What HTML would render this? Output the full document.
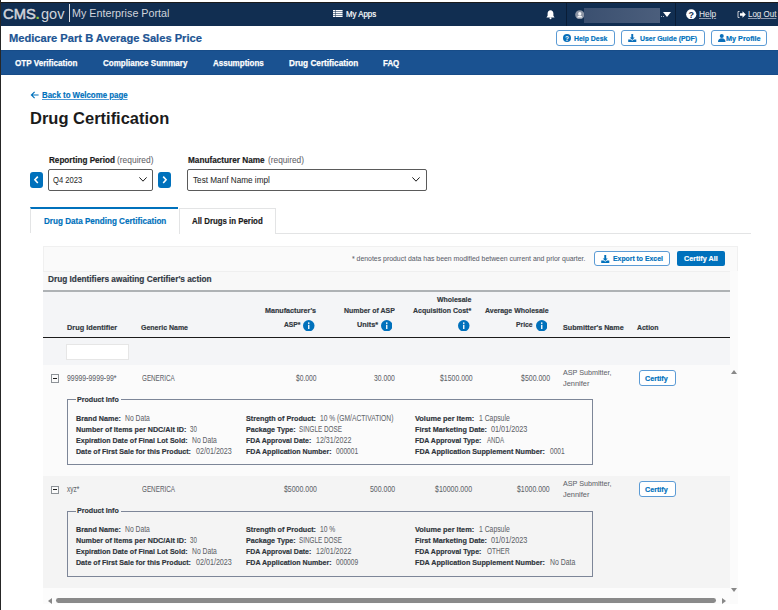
<!DOCTYPE html>
<html><head><meta charset="utf-8"><style>
html,body{margin:0;padding:0;}
body{width:778px;height:610px;overflow:hidden;position:relative;background:#fff;font-family:'Liberation Sans', sans-serif;}
.t{position:absolute;line-height:1;white-space:pre;transform-origin:0 0;}
.bm{display:inline-block;width:0;height:0;vertical-align:baseline;}
.a{position:absolute;box-sizing:border-box;}
</style></head><body>
<!-- header -->
<div class="a" style="left:0;top:2px;width:778px;height:1px;background:#1c1c1c"></div>
<div class="a" style="left:0;top:3px;width:778px;height:23px;background:#112e51"></div>
<div class="a" style="left:0;top:0;width:1px;height:610px;background:#262626;z-index:5"></div>
<div class="a" style="left:69px;top:4px;width:1px;height:18px;background:#d9dbe0"></div>
<!-- my apps icon -->
<svg class="a" style="left:333.3px;top:10px" width="9.6" height="7.1" viewBox="0 0 9.6 7.1"><g fill="#fff"><rect x="0" y="0" width="2" height="1.4"/><rect x="2.5" y="0" width="7.1" height="1.4"/><rect x="0" y="1.9" width="2" height="1.4"/><rect x="2.5" y="1.9" width="7.1" height="1.4"/><rect x="0" y="3.8" width="2" height="1.4"/><rect x="2.5" y="3.8" width="7.1" height="1.4"/><rect x="0" y="5.7" width="2" height="1.4"/><rect x="2.5" y="5.7" width="7.1" height="1.4"/></g></svg>
<!-- bell -->
<svg class="a" style="left:545px;top:9px" width="11" height="11" viewBox="0 0 11 11"><path d="M5.5 1.2c-1.8 0-2.9 1.4-2.9 3.2v2.3L1.4 8.4h8.2L8.4 6.7V4.4c0-1.8-1.1-3.2-2.9-3.2z" fill="#fff"/><circle cx="5.5" cy="9.3" r="1" fill="#fff"/></svg>
<div class="a" style="left:566px;top:3px;width:1px;height:23px;background:#0a1d36"></div>
<!-- user -->
<svg class="a" style="left:574.8px;top:9.8px" width="9.5" height="9.5" viewBox="0 0 10 10"><circle cx="5" cy="5" r="4.8" fill="#8c95a5"/><circle cx="5" cy="3.9" r="1.7" fill="#f4f5f7"/><path d="M2.2 7.9c.5-1.5 1.6-2.1 2.8-2.1s2.3.6 2.8 2.1z" fill="#f4f5f7"/></svg>
<div class="a" style="left:584px;top:8px;width:76px;height:15px;background:linear-gradient(90deg,#3b5070,#4b5e7c)"></div>
<div class="a" style="left:660.5px;top:16px;width:1.2px;height:1.2px;background:#aab2c0"></div><div class="a" style="left:662.8px;top:16px;width:1.2px;height:1.2px;background:#aab2c0"></div>
<svg class="a" style="left:663px;top:12px" width="8" height="5" viewBox="0 0 8 5"><path d="M0 0h8L4 5z" fill="#fff"/></svg>
<div class="a" style="left:675px;top:3px;width:1px;height:23px;background:#0a1d36"></div>
<!-- help icon -->
<svg class="a" style="left:686px;top:8.5px" width="10.5" height="10.5" viewBox="0 0 10.5 10.5"><circle cx="5.25" cy="5.25" r="5.1" fill="#fff"/><text x="5.25" y="8.6" text-anchor="middle" font-family="Liberation Sans" font-weight="700" font-size="9" fill="#112e51">?</text></svg>
<!-- logout icon -->
<svg class="a" style="left:737px;top:10.5px" width="9" height="7" viewBox="0 0 9 7"><path d="M2.5 0.5H1v6h1.5" stroke="#c9ccd4" stroke-width="1" fill="none"/><path d="M3 2.3h2.5V0.3L8.8 3.5 5.5 6.7V4.7H3z" fill="#fff"/></svg>

<!-- subheader buttons -->
<div class="a" style="left:555.7px;top:30px;width:59px;height:15.5px;border:1.5px solid #5b9bd5;border-radius:3px;background:#fff"></div>
<svg class="a" style="left:563px;top:33.8px" width="8" height="8" viewBox="0 0 8 8"><circle cx="4" cy="4" r="4" fill="#0b6fba"/><text x="4" y="6.6" text-anchor="middle" font-family="Liberation Sans" font-weight="700" font-size="6.5" fill="#fff">?</text></svg>
<div class="a" style="left:621.3px;top:30px;width:83.4px;height:15.5px;border:1.5px solid #5b9bd5;border-radius:3px;background:#fff"></div>
<svg class="a" style="left:628px;top:34px" width="8.5" height="8" viewBox="0 0 8.5 8"><path d="M3.3 0h1.9v3.4h1.6L4.25 6 1.7 3.4h1.6z" fill="#0b6fba"/><path d="M0.2 5.4h2.4l1.65 1.4 1.65-1.4h2.4v2.6H0.2z" fill="#0b6fba"/></svg>
<div class="a" style="left:711px;top:30px;width:56px;height:15.5px;border:1.5px solid #5b9bd5;border-radius:3px;background:#fff"></div>
<svg class="a" style="left:718px;top:34px" width="7.5" height="8" viewBox="0 0 7.5 8"><circle cx="3.75" cy="2" r="2" fill="#0b6fba"/><path d="M0 8c0-2.6 1.5-3.7 3.75-3.7S7.5 5.4 7.5 8z" fill="#0b6fba"/></svg>

<!-- nav -->
<div class="a" style="left:0;top:50px;width:778px;height:24.6px;background:#1a5291;border-top:1px solid #174c88;border-bottom:1px solid #174c88"></div>

<!-- back arrow -->
<svg class="a" style="left:30px;top:91px" width="9" height="8" viewBox="0 0 9 8"><path d="M8.6 4H1.6M4.6 0.8L1.4 4l3.2 3.2" stroke="#0071bc" stroke-width="1.15" fill="none"/></svg>

<!-- selects -->
<div class="a" style="left:30px;top:172px;width:13px;height:15.6px;background:#0071bc;border-radius:3px"></div>
<svg class="a" style="left:30px;top:172px" width="13" height="15.6" viewBox="0 0 13 15.6"><path d="M7.8 4.6L4.9 7.8l2.9 3.2" stroke="#fff" stroke-width="1.6" fill="none"/></svg>
<div class="a" style="left:48px;top:169px;width:105px;height:21.5px;border:1.5px solid #5a5a5a;border-radius:2px;background:#fff"></div>
<svg class="a" style="left:139px;top:177px" width="8" height="5" viewBox="0 0 8 5"><path d="M0.4 0.4L4 4.2 7.6 0.4" stroke="#1b1b1b" stroke-width="1" fill="none"/></svg>
<div class="a" style="left:158.3px;top:172px;width:13px;height:15.6px;background:#0071bc;border-radius:3px"></div>
<svg class="a" style="left:158.3px;top:172px" width="13" height="15.6" viewBox="0 0 13 15.6"><path d="M5.2 4.6l2.9 3.2-2.9 3.2" stroke="#fff" stroke-width="1.6" fill="none"/></svg>
<div class="a" style="left:187.4px;top:169px;width:239.3px;height:21.8px;border:1.5px solid #5a5a5a;border-radius:2px;background:#fff"></div>
<svg class="a" style="left:412.3px;top:177px" width="8" height="5" viewBox="0 0 8 5"><path d="M0.4 0.4L4 4.2 7.6 0.4" stroke="#1b1b1b" stroke-width="1" fill="none"/></svg>

<!-- tabs -->
<div class="a" style="left:178.5px;top:233px;width:572.5px;height:1px;background:#e3e4e5"></div>
<div class="a" style="left:30.4px;top:207px;width:148.1px;height:26px;border-left:1px solid #e3e4e5;border-top:2px solid #0071bc;background:#fff"></div>
<div class="a" style="left:178.5px;top:207.6px;width:97px;height:26px;border:1px solid #e3e4e5;border-bottom:none;background:#fff"></div>

<!-- container -->
<div class="a" style="left:42.9px;top:245.8px;width:695.1px;height:358.6px;background:#fafafa;border:1px solid #f0f0f0"></div>
<div class="a" style="left:42.9px;top:270.5px;width:687.4px;height:1px;background:#efefef"></div>
<!-- export / certify all -->
<div class="a" style="left:594px;top:251px;width:76px;height:15.3px;border:1.5px solid #5b9bd5;border-radius:3px;background:#fff"></div>
<svg class="a" style="left:601px;top:255px" width="8.5" height="8" viewBox="0 0 8.5 8"><path d="M3.3 0h1.9v3.4h1.6L4.25 6 1.7 3.4h1.6z" fill="#0071bc"/><path d="M0.2 5.4h2.4l1.65 1.4 1.65-1.4h2.4v2.6H0.2z" fill="#0071bc"/></svg>
<div class="a" style="left:677px;top:251px;width:48px;height:15.3px;background:#0071bc;border-radius:2px"></div>

<!-- title row -->
<div class="a" style="left:42.9px;top:271.5px;width:687.4px;height:18px;background:#f8f8f8"></div>
<div class="a" style="left:42.9px;top:290px;width:687.4px;height:2px;background:#aeb2b5"></div>
<!-- header row -->
<div class="a" style="left:42.9px;top:292px;width:687.4px;height:72.8px;background:#f4f5f7"></div>
<div class="a" style="left:42.9px;top:336.8px;width:687.4px;height:1.2px;background:#1b1b1b"></div>
<!-- info icons -->
<svg class="a" style="left:303.3px;top:319.6px" width="11.5" height="11.5" viewBox="0 0 12 12"><circle cx="6" cy="6" r="6" fill="#0071bc"/><rect x="5.3" y="5" width="1.4" height="4.4" fill="#fff"/><circle cx="6" cy="3.3" r="0.85" fill="#fff"/></svg>
<svg class="a" style="left:380.6px;top:319.6px" width="11.5" height="11.5" viewBox="0 0 12 12"><circle cx="6" cy="6" r="6" fill="#0071bc"/><rect x="5.3" y="5" width="1.4" height="4.4" fill="#fff"/><circle cx="6" cy="3.3" r="0.85" fill="#fff"/></svg>
<svg class="a" style="left:458.2px;top:319.8px" width="11.5" height="11.5" viewBox="0 0 12 12"><circle cx="6" cy="6" r="6" fill="#0071bc"/><rect x="5.3" y="5" width="1.4" height="4.4" fill="#fff"/><circle cx="6" cy="3.3" r="0.85" fill="#fff"/></svg>
<svg class="a" style="left:535.9px;top:319.8px" width="11.5" height="11.5" viewBox="0 0 12 12"><circle cx="6" cy="6" r="6" fill="#0071bc"/><rect x="5.3" y="5" width="1.4" height="4.4" fill="#fff"/><circle cx="6" cy="3.3" r="0.85" fill="#fff"/></svg>
<!-- filter input -->
<div class="a" style="left:66.2px;top:344.1px;width:63.3px;height:16px;background:#fff;border:1px solid #e6e6e6"></div>

<!-- rows -->
<div class="a" style="left:42.9px;top:364.8px;width:687.4px;height:111.2px;background:#fbfbfb"></div>
<div class="a" style="left:42.9px;top:476px;width:687.4px;height:112px;background:#f4f4f4"></div>
<!-- minus boxes -->
<div class="a" style="left:51px;top:374px;width:8px;height:8.5px;border:1px solid #8d9297;background:#fafafa"></div>
<div class="a" style="left:53px;top:377.8px;width:4px;height:1px;background:#1b1b1b"></div>
<div class="a" style="left:51px;top:485.5px;width:8px;height:8.5px;border:1px solid #8d9297;background:#fafafa"></div>
<div class="a" style="left:53px;top:489.3px;width:4px;height:1px;background:#1b1b1b"></div>
<!-- certify buttons -->
<div class="a" style="left:638.5px;top:370px;width:37.1px;height:16px;border:1.5px solid #5b9bd5;border-radius:3px;background:#fff"></div>
<div class="a" style="left:638.5px;top:481.2px;width:37.1px;height:16px;border:1.5px solid #5b9bd5;border-radius:3px;background:#fff"></div>
<!-- fieldsets -->
<div class="a" style="left:67px;top:399px;width:526.4px;height:66.1px;border:1px solid #7d8698;border-top:none"></div>
<div class="a" style="left:67px;top:399px;width:9px;height:1px;background:#7d8698"></div>
<div class="a" style="left:120.5px;top:399px;width:472.9px;height:1px;background:#7d8698"></div>
<div class="a" style="left:67px;top:510.6px;width:526.4px;height:66.5px;border:1px solid #7d8698;border-top:none"></div>
<div class="a" style="left:67px;top:510.6px;width:9px;height:1px;background:#7d8698"></div>
<div class="a" style="left:120.5px;top:510.6px;width:472.9px;height:1px;background:#7d8698"></div>

<!-- scrollbars -->
<div class="a" style="left:730.3px;top:271px;width:7.7px;height:333px;background:#fbfbfb"></div>
<svg class="a" style="left:731px;top:369.5px" width="6" height="4" viewBox="0 0 6 4"><path d="M0 4L3 0l3 4z" fill="#888"/></svg>
<svg class="a" style="left:731px;top:588px" width="6" height="4" viewBox="0 0 6 4"><path d="M0 0l3 4 3-4z" fill="#888"/></svg>
<div class="a" style="left:42.9px;top:588px;width:687.4px;height:16.4px;background:#fcfcfc"></div>
<svg class="a" style="left:48px;top:597.5px" width="4" height="6" viewBox="0 0 4 6"><path d="M4 0L0 3l4 3z" fill="#888"/></svg>
<div class="a" style="left:55.7px;top:598px;width:660.4px;height:4.8px;background:#8a8a8a;border-radius:2.4px"></div>
<svg class="a" style="left:721.8px;top:597.5px" width="4" height="6" viewBox="0 0 4 6"><path d="M0 0l4 3-4 3z" fill="#888"/></svg>

<span class="t" id="t0" style="left:2.70px;top:7.00px;font-size:14.9px;font-weight:400;color:#d0d4db;font-family:'Liberation Sans', sans-serif;transform:scaleX(0.9892);-webkit-text-stroke:0.5px #d0d4db;"><i class="bm"></i>CMS</span>
<span class="t" id="t1" style="left:35.50px;top:6.00px;font-size:15px;font-weight:700;color:#94c83d;font-family:'Liberation Sans', sans-serif;"><i class="bm"></i>.</span>
<span class="t" id="t2" style="left:41.00px;top:7.00px;font-size:14.8px;font-weight:400;color:#d0d4db;font-family:'Liberation Sans', sans-serif;transform:scaleX(0.9812);"><i class="bm"></i>gov</span>
<span class="t" id="t3" style="left:72.40px;top:8.00px;font-size:11.2px;font-weight:400;color:#d0d4db;font-family:'Liberation Sans', sans-serif;transform:scaleX(0.9618);"><i class="bm"></i>My Enterprise Portal</span>
<span class="t" id="t4" style="left:345.70px;top:10.00px;font-size:8.5px;font-weight:400;color:#ffffff;font-family:'Liberation Sans', sans-serif;transform:scaleX(0.9233);-webkit-text-stroke:0.2px #fff;"><i class="bm"></i>My Apps</span>
<span class="t" id="t5" style="left:699.00px;top:10.00px;font-size:8.4px;font-weight:400;color:#e3e6ea;font-family:'Liberation Sans', sans-serif;transform:scaleX(0.9962);-webkit-text-stroke:0.05px currentColor;text-decoration:underline;text-decoration-color:#8e9bb0;text-decoration-thickness:1px;text-underline-offset:1px;"><i class="bm"></i>Help</span>
<span class="t" id="t6" style="left:748.00px;top:10.00px;font-size:8.4px;font-weight:400;color:#e3e6ea;font-family:'Liberation Sans', sans-serif;transform:scaleX(0.9517);-webkit-text-stroke:0.05px currentColor;text-decoration:underline;text-decoration-color:#8e9bb0;text-decoration-thickness:1px;text-underline-offset:1px;"><i class="bm"></i>Log Out</span>
<span class="t" id="t7" style="left:8.90px;top:33.00px;font-size:11.4px;font-weight:700;color:#205493;font-family:'Liberation Sans', sans-serif;transform:scaleX(0.9776);-webkit-text-stroke:0.2px #205493;"><i class="bm"></i>Medicare Part B Average Sales Price</span>
<span class="t" id="t8" style="left:574.00px;top:35.00px;font-size:7.6px;font-weight:700;color:#0071bc;font-family:'Liberation Sans', sans-serif;transform:scaleX(0.9068);-webkit-text-stroke:0.18px currentColor;"><i class="bm"></i>Help Desk</span>
<span class="t" id="t9" style="left:639.70px;top:35.00px;font-size:7.6px;font-weight:700;color:#0071bc;font-family:'Liberation Sans', sans-serif;transform:scaleX(0.9078);-webkit-text-stroke:0.18px currentColor;"><i class="bm"></i>User Guide (PDF)</span>
<span class="t" id="t10" style="left:725.60px;top:35.00px;font-size:7.6px;font-weight:700;color:#0071bc;font-family:'Liberation Sans', sans-serif;transform:scaleX(0.9538);-webkit-text-stroke:0.18px currentColor;"><i class="bm"></i>My Profile</span>
<span class="t" id="t11" style="left:14.90px;top:58.00px;font-size:9.4px;font-weight:700;color:#ffffff;font-family:'Liberation Sans', sans-serif;transform:scaleX(0.8626);-webkit-text-stroke:0.25px #fff;"><i class="bm"></i>OTP Verification</span>
<span class="t" id="t12" style="left:103.30px;top:58.00px;font-size:9.4px;font-weight:700;color:#ffffff;font-family:'Liberation Sans', sans-serif;transform:scaleX(0.8574);-webkit-text-stroke:0.25px #fff;"><i class="bm"></i>Compliance Summary</span>
<span class="t" id="t13" style="left:213.40px;top:58.00px;font-size:9.4px;font-weight:700;color:#ffffff;font-family:'Liberation Sans', sans-serif;transform:scaleX(0.8552);-webkit-text-stroke:0.25px #fff;"><i class="bm"></i>Assumptions</span>
<span class="t" id="t14" style="left:288.80px;top:58.00px;font-size:9.4px;font-weight:700;color:#ffffff;font-family:'Liberation Sans', sans-serif;transform:scaleX(0.8748);-webkit-text-stroke:0.25px #fff;"><i class="bm"></i>Drug Certification</span>
<span class="t" id="t15" style="left:383.00px;top:58.00px;font-size:9.4px;font-weight:700;color:#ffffff;font-family:'Liberation Sans', sans-serif;transform:scaleX(0.8430);-webkit-text-stroke:0.25px #fff;"><i class="bm"></i>FAQ</span>
<span class="t" id="t16" style="left:41.60px;top:91.00px;font-size:8.6px;font-weight:700;color:#0071bc;font-family:'Liberation Sans', sans-serif;transform:scaleX(0.9160);-webkit-text-stroke:0.18px currentColor;text-decoration:underline;text-decoration-thickness:0.8px;text-underline-offset:0.6px;text-decoration-color:#4f9ad6;"><i class="bm"></i>Back to Welcome page</span>
<span class="t" id="t17" style="left:30.29px;top:110.00px;font-size:16.3px;font-weight:700;color:#1b1b1b;font-family:'Liberation Sans', sans-serif;transform:scaleX(1.0129);"><i class="bm"></i>Drug Certification</span>
<span class="t" id="t18" style="left:48.60px;top:156.00px;font-size:8.6px;font-weight:700;color:#1b1b1b;font-family:'Liberation Sans', sans-serif;transform:scaleX(0.9459);-webkit-text-stroke:0.18px currentColor;"><i class="bm"></i>Reporting Period</span>
<span class="t" id="t19" style="left:116.60px;top:156.00px;font-size:8.6px;font-weight:400;color:#5f6368;font-family:'Liberation Sans', sans-serif;transform:scaleX(0.9788);-webkit-text-stroke:0.05px currentColor;"><i class="bm"></i>(required)</span>
<span class="t" id="t20" style="left:188.40px;top:156.00px;font-size:8.6px;font-weight:700;color:#1b1b1b;font-family:'Liberation Sans', sans-serif;transform:scaleX(0.9546);-webkit-text-stroke:0.18px currentColor;"><i class="bm"></i>Manufacturer Name</span>
<span class="t" id="t21" style="left:267.60px;top:156.00px;font-size:8.6px;font-weight:400;color:#5f6368;font-family:'Liberation Sans', sans-serif;transform:scaleX(0.9655);-webkit-text-stroke:0.05px currentColor;"><i class="bm"></i>(required)</span>
<span class="t" id="t22" style="left:53.20px;top:176.00px;font-size:8.6px;font-weight:400;color:#2b2b2b;font-family:'Liberation Sans', sans-serif;transform:scaleX(0.8858);-webkit-text-stroke:0.05px currentColor;"><i class="bm"></i>Q4 2023</span>
<span class="t" id="t23" style="left:193.40px;top:176.00px;font-size:8.6px;font-weight:400;color:#2b2b2b;font-family:'Liberation Sans', sans-serif;transform:scaleX(0.9517);-webkit-text-stroke:0.05px currentColor;"><i class="bm"></i>Test Manf Name impl</span>
<span class="t" id="t24" style="left:43.70px;top:217.00px;font-size:8.5px;font-weight:700;color:#0071bc;font-family:'Liberation Sans', sans-serif;transform:scaleX(0.9520);-webkit-text-stroke:0.18px currentColor;"><i class="bm"></i>Drug Data Pending Certification</span>
<span class="t" id="t25" style="left:192.00px;top:217.00px;font-size:8.5px;font-weight:700;color:#1b1b1b;font-family:'Liberation Sans', sans-serif;transform:scaleX(0.9238);-webkit-text-stroke:0.18px currentColor;"><i class="bm"></i>All Drugs in Period</span>
<span class="t" id="t26" style="left:352.40px;top:255.00px;font-size:7.3px;font-weight:400;color:#5b616b;font-family:'Liberation Sans', sans-serif;transform:scaleX(0.9449);-webkit-text-stroke:0.05px currentColor;"><i class="bm"></i>* denotes product data has been modified between current and prior quarter.</span>
<span class="t" id="t27" style="left:612.90px;top:255.00px;font-size:7.4px;font-weight:700;color:#0071bc;font-family:'Liberation Sans', sans-serif;transform:scaleX(0.9265);-webkit-text-stroke:0.18px currentColor;"><i class="bm"></i>Export to Excel</span>
<span class="t" id="t28" style="left:684.20px;top:255.00px;font-size:7.6px;font-weight:700;color:#ffffff;font-family:'Liberation Sans', sans-serif;transform:scaleX(0.9453);-webkit-text-stroke:0.18px currentColor;"><i class="bm"></i>Certify All</span>
<span class="t" id="t29" style="left:48.00px;top:275.00px;font-size:8.5px;font-weight:700;color:#323a45;font-family:'Liberation Sans', sans-serif;transform:scaleX(0.9721);-webkit-text-stroke:0.18px currentColor;"><i class="bm"></i>Drug Identifiers awaiting Certifier's action</span>
<span class="t" id="t30" style="left:66.50px;top:324.00px;font-size:7.8px;font-weight:700;color:#323840;font-family:'Liberation Sans', sans-serif;transform:scaleX(0.9409);-webkit-text-stroke:0.18px currentColor;"><i class="bm"></i>Drug Identifier</span>
<span class="t" id="t31" style="left:141.00px;top:324.00px;font-size:7.8px;font-weight:700;color:#323840;font-family:'Liberation Sans', sans-serif;transform:scaleX(0.8964);-webkit-text-stroke:0.18px currentColor;"><i class="bm"></i>Generic Name</span>
<span class="t" id="t32" style="left:265.20px;top:307.00px;font-size:7.8px;font-weight:700;color:#323840;font-family:'Liberation Sans', sans-serif;transform:scaleX(0.9192);-webkit-text-stroke:0.18px currentColor;"><i class="bm"></i>Manufacturer's</span>
<span class="t" id="t33" style="left:283.50px;top:321.00px;font-size:7.8px;font-weight:700;color:#323840;font-family:'Liberation Sans', sans-serif;transform:scaleX(0.8586);-webkit-text-stroke:0.18px currentColor;"><i class="bm"></i>ASP*</span>
<span class="t" id="t34" style="left:343.60px;top:307.00px;font-size:7.8px;font-weight:700;color:#323840;font-family:'Liberation Sans', sans-serif;transform:scaleX(0.8933);-webkit-text-stroke:0.18px currentColor;"><i class="bm"></i>Number of ASP</span>
<span class="t" id="t35" style="left:356.70px;top:321.00px;font-size:7.8px;font-weight:700;color:#323840;font-family:'Liberation Sans', sans-serif;transform:scaleX(0.9322);-webkit-text-stroke:0.18px currentColor;"><i class="bm"></i>Units*</span>
<span class="t" id="t36" style="left:437.00px;top:296.00px;font-size:7.8px;font-weight:700;color:#323840;font-family:'Liberation Sans', sans-serif;transform:scaleX(0.8923);-webkit-text-stroke:0.18px currentColor;"><i class="bm"></i>Wholesale</span>
<span class="t" id="t37" style="left:413.40px;top:307.00px;font-size:7.8px;font-weight:700;color:#323840;font-family:'Liberation Sans', sans-serif;transform:scaleX(0.8947);-webkit-text-stroke:0.18px currentColor;"><i class="bm"></i>Acquisition Cost*</span>
<span class="t" id="t38" style="left:485.30px;top:307.00px;font-size:7.8px;font-weight:700;color:#323840;font-family:'Liberation Sans', sans-serif;transform:scaleX(0.8932);-webkit-text-stroke:0.18px currentColor;"><i class="bm"></i>Average Wholesale</span>
<span class="t" id="t39" style="left:516.20px;top:321.00px;font-size:7.8px;font-weight:700;color:#323840;font-family:'Liberation Sans', sans-serif;transform:scaleX(0.8664);-webkit-text-stroke:0.18px currentColor;"><i class="bm"></i>Price</span>
<span class="t" id="t40" style="left:562.70px;top:324.00px;font-size:7.8px;font-weight:700;color:#323840;font-family:'Liberation Sans', sans-serif;transform:scaleX(0.9198);-webkit-text-stroke:0.18px currentColor;"><i class="bm"></i>Submitter's Name</span>
<span class="t" id="t41" style="left:637.20px;top:324.00px;font-size:7.8px;font-weight:700;color:#323840;font-family:'Liberation Sans', sans-serif;transform:scaleX(0.8860);-webkit-text-stroke:0.18px currentColor;"><i class="bm"></i>Action</span>
<span class="t" id="t42" style="left:67.00px;top:374.00px;font-size:8.5px;font-weight:400;color:#5f646a;font-family:'Liberation Sans', sans-serif;transform:scaleX(0.8125);-webkit-text-stroke:0.05px currentColor;"><i class="bm"></i>99999-9999-99*</span>
<span class="t" id="t43" style="left:142.00px;top:374.00px;font-size:8.5px;font-weight:400;color:#5f646a;font-family:'Liberation Sans', sans-serif;transform:scaleX(0.7378);-webkit-text-stroke:0.05px currentColor;"><i class="bm"></i>GENERICA</span>
<span class="t" id="t44" style="left:296.20px;top:374.00px;font-size:8.5px;font-weight:400;color:#5f646a;font-family:'Liberation Sans', sans-serif;transform:scaleX(0.7918);-webkit-text-stroke:0.05px currentColor;"><i class="bm"></i>$0.000</span>
<span class="t" id="t45" style="left:373.60px;top:374.00px;font-size:8.5px;font-weight:400;color:#5f646a;font-family:'Liberation Sans', sans-serif;transform:scaleX(0.8032);-webkit-text-stroke:0.05px currentColor;"><i class="bm"></i>30.000</span>
<span class="t" id="t46" style="left:439.50px;top:374.00px;font-size:8.5px;font-weight:400;color:#5f646a;font-family:'Liberation Sans', sans-serif;transform:scaleX(0.8133);-webkit-text-stroke:0.05px currentColor;"><i class="bm"></i>$1500.000</span>
<span class="t" id="t47" style="left:520.50px;top:374.00px;font-size:8.5px;font-weight:400;color:#5f646a;font-family:'Liberation Sans', sans-serif;transform:scaleX(0.8201);-webkit-text-stroke:0.05px currentColor;"><i class="bm"></i>$500.000</span>
<span class="t" id="t48" style="left:563.30px;top:369.00px;font-size:8.0px;font-weight:400;color:#5f646a;font-family:'Liberation Sans', sans-serif;transform:scaleX(0.8978);-webkit-text-stroke:0.05px currentColor;"><i class="bm"></i>ASP Submitter,</span>
<span class="t" id="t49" style="left:563.30px;top:380.00px;font-size:8.0px;font-weight:400;color:#5f646a;font-family:'Liberation Sans', sans-serif;transform:scaleX(0.9272);-webkit-text-stroke:0.05px currentColor;"><i class="bm"></i>Jennifer</span>
<span class="t" id="t50" style="left:645.20px;top:375.00px;font-size:7.8px;font-weight:700;color:#0071bc;font-family:'Liberation Sans', sans-serif;transform:scaleX(0.9188);-webkit-text-stroke:0.18px currentColor;"><i class="bm"></i>Certify</span>
<span class="t" id="t51" style="left:77.30px;top:396.00px;font-size:7.9px;font-weight:700;color:#2e343b;font-family:'Liberation Sans', sans-serif;transform:scaleX(0.8983);-webkit-text-stroke:0.18px currentColor;"><i class="bm"></i>Product Info</span>
<span class="t" id="t52" style="left:76.20px;top:415.00px;font-size:8.0px;font-weight:700;color:#2e343b;font-family:'Liberation Sans', sans-serif;transform:scaleX(0.8997);-webkit-text-stroke:0.18px currentColor;"><i class="bm"></i>Brand Name:</span>
<span class="t" id="t53" style="left:124.80px;top:415.00px;font-size:8.2px;font-weight:400;color:#5f646a;font-family:'Liberation Sans', sans-serif;transform:scaleX(0.8267);-webkit-text-stroke:0.05px currentColor;"><i class="bm"></i>No Data</span>
<span class="t" id="t54" style="left:76.20px;top:426.00px;font-size:8.0px;font-weight:700;color:#2e343b;font-family:'Liberation Sans', sans-serif;transform:scaleX(0.8966);-webkit-text-stroke:0.18px currentColor;"><i class="bm"></i>Number of Items per NDC/Alt ID:</span>
<span class="t" id="t55" style="left:190.30px;top:426.00px;font-size:8.2px;font-weight:400;color:#5f646a;font-family:'Liberation Sans', sans-serif;transform:scaleX(0.7537);-webkit-text-stroke:0.05px currentColor;"><i class="bm"></i>30</span>
<span class="t" id="t56" style="left:76.20px;top:437.00px;font-size:8.0px;font-weight:700;color:#2e343b;font-family:'Liberation Sans', sans-serif;transform:scaleX(0.8840);-webkit-text-stroke:0.18px currentColor;"><i class="bm"></i>Expiration Date of Final Lot Sold:</span>
<span class="t" id="t57" style="left:191.60px;top:437.00px;font-size:8.2px;font-weight:400;color:#5f646a;font-family:'Liberation Sans', sans-serif;transform:scaleX(0.8267);-webkit-text-stroke:0.05px currentColor;"><i class="bm"></i>No Data</span>
<span class="t" id="t58" style="left:76.20px;top:448.00px;font-size:8.0px;font-weight:700;color:#2e343b;font-family:'Liberation Sans', sans-serif;transform:scaleX(0.8859);-webkit-text-stroke:0.18px currentColor;"><i class="bm"></i>Date of First Sale for this Product:</span>
<span class="t" id="t59" style="left:195.50px;top:448.00px;font-size:8.2px;font-weight:400;color:#5f646a;font-family:'Liberation Sans', sans-serif;transform:scaleX(0.8739);-webkit-text-stroke:0.05px currentColor;"><i class="bm"></i>02/01/2023</span>
<span class="t" id="t60" style="left:245.80px;top:415.00px;font-size:8.0px;font-weight:700;color:#2e343b;font-family:'Liberation Sans', sans-serif;transform:scaleX(0.9001);-webkit-text-stroke:0.18px currentColor;"><i class="bm"></i>Strength of Product:</span>
<span class="t" id="t61" style="left:320.30px;top:415.00px;font-size:8.2px;font-weight:400;color:#5f646a;font-family:'Liberation Sans', sans-serif;transform:scaleX(0.8174);-webkit-text-stroke:0.05px currentColor;"><i class="bm"></i>10 % (GM/ACTIVATION)</span>
<span class="t" id="t62" style="left:245.80px;top:426.00px;font-size:8.0px;font-weight:700;color:#2e343b;font-family:'Liberation Sans', sans-serif;transform:scaleX(0.8965);-webkit-text-stroke:0.18px currentColor;"><i class="bm"></i>Package Type:</span>
<span class="t" id="t63" style="left:299.00px;top:426.00px;font-size:8.2px;font-weight:400;color:#5f646a;font-family:'Liberation Sans', sans-serif;transform:scaleX(0.7725);-webkit-text-stroke:0.05px currentColor;"><i class="bm"></i>SINGLE DOSE</span>
<span class="t" id="t64" style="left:245.80px;top:437.00px;font-size:8.0px;font-weight:700;color:#2e343b;font-family:'Liberation Sans', sans-serif;transform:scaleX(0.8705);-webkit-text-stroke:0.18px currentColor;"><i class="bm"></i>FDA Approval Date:</span>
<span class="t" id="t65" style="left:315.90px;top:437.00px;font-size:8.2px;font-weight:400;color:#5f646a;font-family:'Liberation Sans', sans-serif;transform:scaleX(0.8618);-webkit-text-stroke:0.05px currentColor;"><i class="bm"></i>12/31/2022</span>
<span class="t" id="t66" style="left:245.80px;top:448.00px;font-size:8.0px;font-weight:700;color:#2e343b;font-family:'Liberation Sans', sans-serif;transform:scaleX(0.8855);-webkit-text-stroke:0.18px currentColor;"><i class="bm"></i>FDA Application Number:</span>
<span class="t" id="t67" style="left:336.00px;top:448.00px;font-size:8.2px;font-weight:400;color:#5f646a;font-family:'Liberation Sans', sans-serif;transform:scaleX(0.8103);-webkit-text-stroke:0.05px currentColor;"><i class="bm"></i>000001</span>
<span class="t" id="t68" style="left:415.30px;top:415.00px;font-size:8.0px;font-weight:700;color:#2e343b;font-family:'Liberation Sans', sans-serif;transform:scaleX(0.9207);-webkit-text-stroke:0.18px currentColor;"><i class="bm"></i>Volume per Item:</span>
<span class="t" id="t69" style="left:478.80px;top:415.00px;font-size:8.2px;font-weight:400;color:#5f646a;font-family:'Liberation Sans', sans-serif;transform:scaleX(0.8335);-webkit-text-stroke:0.05px currentColor;"><i class="bm"></i>1 Capsule</span>
<span class="t" id="t70" style="left:415.30px;top:426.00px;font-size:8.0px;font-weight:700;color:#2e343b;font-family:'Liberation Sans', sans-serif;transform:scaleX(0.9049);-webkit-text-stroke:0.18px currentColor;"><i class="bm"></i>First Marketing Date:</span>
<span class="t" id="t71" style="left:491.10px;top:426.00px;font-size:8.2px;font-weight:400;color:#5f646a;font-family:'Liberation Sans', sans-serif;transform:scaleX(0.8884);-webkit-text-stroke:0.05px currentColor;"><i class="bm"></i>01/01/2023</span>
<span class="t" id="t72" style="left:415.30px;top:437.00px;font-size:8.0px;font-weight:700;color:#2e343b;font-family:'Liberation Sans', sans-serif;transform:scaleX(0.8766);-webkit-text-stroke:0.18px currentColor;"><i class="bm"></i>FDA Approval Type:</span>
<span class="t" id="t73" style="left:486.50px;top:437.00px;font-size:8.2px;font-weight:400;color:#5f646a;font-family:'Liberation Sans', sans-serif;transform:scaleX(0.7515);-webkit-text-stroke:0.05px currentColor;"><i class="bm"></i>ANDA</span>
<span class="t" id="t74" style="left:415.30px;top:448.00px;font-size:8.0px;font-weight:700;color:#2e343b;font-family:'Liberation Sans', sans-serif;transform:scaleX(0.8972);-webkit-text-stroke:0.18px currentColor;"><i class="bm"></i>FDA Application Supplement Number:</span>
<span class="t" id="t75" style="left:549.50px;top:448.00px;font-size:8.2px;font-weight:400;color:#5f646a;font-family:'Liberation Sans', sans-serif;transform:scaleX(0.7985);-webkit-text-stroke:0.05px currentColor;"><i class="bm"></i>0001</span>
<span class="t" id="t76" style="left:67.30px;top:485.00px;font-size:8.5px;font-weight:400;color:#5f646a;font-family:'Liberation Sans', sans-serif;transform:scaleX(0.7642);-webkit-text-stroke:0.05px currentColor;"><i class="bm"></i>xyz*</span>
<span class="t" id="t77" style="left:141.80px;top:485.00px;font-size:8.5px;font-weight:400;color:#5f646a;font-family:'Liberation Sans', sans-serif;transform:scaleX(0.7423);-webkit-text-stroke:0.05px currentColor;"><i class="bm"></i>GENERICA</span>
<span class="t" id="t78" style="left:284.20px;top:485.00px;font-size:8.5px;font-weight:400;color:#5f646a;font-family:'Liberation Sans', sans-serif;transform:scaleX(0.8182);-webkit-text-stroke:0.05px currentColor;"><i class="bm"></i>$5000.000</span>
<span class="t" id="t79" style="left:369.50px;top:485.00px;font-size:8.5px;font-weight:400;color:#5f646a;font-family:'Liberation Sans', sans-serif;transform:scaleX(0.8194);-webkit-text-stroke:0.05px currentColor;"><i class="bm"></i>500.000</span>
<span class="t" id="t80" style="left:435.10px;top:485.00px;font-size:8.5px;font-weight:400;color:#5f646a;font-family:'Liberation Sans', sans-serif;transform:scaleX(0.8256);-webkit-text-stroke:0.05px currentColor;"><i class="bm"></i>$10000.000</span>
<span class="t" id="t81" style="left:516.70px;top:485.00px;font-size:8.5px;font-weight:400;color:#5f646a;font-family:'Liberation Sans', sans-serif;transform:scaleX(0.8133);-webkit-text-stroke:0.05px currentColor;"><i class="bm"></i>$1000.000</span>
<span class="t" id="t82" style="left:563.30px;top:480.00px;font-size:8.0px;font-weight:400;color:#5f646a;font-family:'Liberation Sans', sans-serif;transform:scaleX(0.8978);-webkit-text-stroke:0.05px currentColor;"><i class="bm"></i>ASP Submitter,</span>
<span class="t" id="t83" style="left:563.30px;top:491.00px;font-size:8.0px;font-weight:400;color:#5f646a;font-family:'Liberation Sans', sans-serif;transform:scaleX(0.9272);-webkit-text-stroke:0.05px currentColor;"><i class="bm"></i>Jennifer</span>
<span class="t" id="t84" style="left:645.20px;top:486.00px;font-size:7.8px;font-weight:700;color:#0071bc;font-family:'Liberation Sans', sans-serif;transform:scaleX(0.9188);-webkit-text-stroke:0.18px currentColor;"><i class="bm"></i>Certify</span>
<span class="t" id="t85" style="left:77.30px;top:507.00px;font-size:7.9px;font-weight:700;color:#2e343b;font-family:'Liberation Sans', sans-serif;transform:scaleX(0.8983);-webkit-text-stroke:0.18px currentColor;"><i class="bm"></i>Product Info</span>
<span class="t" id="t86" style="left:76.20px;top:526.00px;font-size:8.0px;font-weight:700;color:#2e343b;font-family:'Liberation Sans', sans-serif;transform:scaleX(0.8997);-webkit-text-stroke:0.18px currentColor;"><i class="bm"></i>Brand Name:</span>
<span class="t" id="t87" style="left:124.80px;top:526.00px;font-size:8.2px;font-weight:400;color:#5f646a;font-family:'Liberation Sans', sans-serif;transform:scaleX(0.8267);-webkit-text-stroke:0.05px currentColor;"><i class="bm"></i>No Data</span>
<span class="t" id="t88" style="left:76.20px;top:537.00px;font-size:8.0px;font-weight:700;color:#2e343b;font-family:'Liberation Sans', sans-serif;transform:scaleX(0.8966);-webkit-text-stroke:0.18px currentColor;"><i class="bm"></i>Number of Items per NDC/Alt ID:</span>
<span class="t" id="t89" style="left:190.30px;top:537.00px;font-size:8.2px;font-weight:400;color:#5f646a;font-family:'Liberation Sans', sans-serif;transform:scaleX(0.7537);-webkit-text-stroke:0.05px currentColor;"><i class="bm"></i>30</span>
<span class="t" id="t90" style="left:76.20px;top:548.00px;font-size:8.0px;font-weight:700;color:#2e343b;font-family:'Liberation Sans', sans-serif;transform:scaleX(0.8840);-webkit-text-stroke:0.18px currentColor;"><i class="bm"></i>Expiration Date of Final Lot Sold:</span>
<span class="t" id="t91" style="left:191.60px;top:548.00px;font-size:8.2px;font-weight:400;color:#5f646a;font-family:'Liberation Sans', sans-serif;transform:scaleX(0.8267);-webkit-text-stroke:0.05px currentColor;"><i class="bm"></i>No Data</span>
<span class="t" id="t92" style="left:76.20px;top:559.00px;font-size:8.0px;font-weight:700;color:#2e343b;font-family:'Liberation Sans', sans-serif;transform:scaleX(0.8859);-webkit-text-stroke:0.18px currentColor;"><i class="bm"></i>Date of First Sale for this Product:</span>
<span class="t" id="t93" style="left:195.50px;top:559.00px;font-size:8.2px;font-weight:400;color:#5f646a;font-family:'Liberation Sans', sans-serif;transform:scaleX(0.8739);-webkit-text-stroke:0.05px currentColor;"><i class="bm"></i>02/01/2023</span>
<span class="t" id="t94" style="left:245.80px;top:526.00px;font-size:8.0px;font-weight:700;color:#2e343b;font-family:'Liberation Sans', sans-serif;transform:scaleX(0.9001);-webkit-text-stroke:0.18px currentColor;"><i class="bm"></i>Strength of Product:</span>
<span class="t" id="t95" style="left:320.30px;top:526.00px;font-size:8.2px;font-weight:400;color:#5f646a;font-family:'Liberation Sans', sans-serif;transform:scaleX(0.8215);-webkit-text-stroke:0.05px currentColor;"><i class="bm"></i>10 %</span>
<span class="t" id="t96" style="left:245.80px;top:537.00px;font-size:8.0px;font-weight:700;color:#2e343b;font-family:'Liberation Sans', sans-serif;transform:scaleX(0.8965);-webkit-text-stroke:0.18px currentColor;"><i class="bm"></i>Package Type:</span>
<span class="t" id="t97" style="left:299.00px;top:537.00px;font-size:8.2px;font-weight:400;color:#5f646a;font-family:'Liberation Sans', sans-serif;transform:scaleX(0.7725);-webkit-text-stroke:0.05px currentColor;"><i class="bm"></i>SINGLE DOSE</span>
<span class="t" id="t98" style="left:245.80px;top:548.00px;font-size:8.0px;font-weight:700;color:#2e343b;font-family:'Liberation Sans', sans-serif;transform:scaleX(0.8705);-webkit-text-stroke:0.18px currentColor;"><i class="bm"></i>FDA Approval Date:</span>
<span class="t" id="t99" style="left:315.90px;top:548.00px;font-size:8.2px;font-weight:400;color:#5f646a;font-family:'Liberation Sans', sans-serif;transform:scaleX(0.8618);-webkit-text-stroke:0.05px currentColor;"><i class="bm"></i>12/01/2022</span>
<span class="t" id="t100" style="left:245.80px;top:559.00px;font-size:8.0px;font-weight:700;color:#2e343b;font-family:'Liberation Sans', sans-serif;transform:scaleX(0.8855);-webkit-text-stroke:0.18px currentColor;"><i class="bm"></i>FDA Application Number:</span>
<span class="t" id="t101" style="left:336.00px;top:559.00px;font-size:8.2px;font-weight:400;color:#5f646a;font-family:'Liberation Sans', sans-serif;transform:scaleX(0.8103);-webkit-text-stroke:0.05px currentColor;"><i class="bm"></i>000009</span>
<span class="t" id="t102" style="left:415.30px;top:526.00px;font-size:8.0px;font-weight:700;color:#2e343b;font-family:'Liberation Sans', sans-serif;transform:scaleX(0.9207);-webkit-text-stroke:0.18px currentColor;"><i class="bm"></i>Volume per Item:</span>
<span class="t" id="t103" style="left:478.80px;top:526.00px;font-size:8.2px;font-weight:400;color:#5f646a;font-family:'Liberation Sans', sans-serif;transform:scaleX(0.8335);-webkit-text-stroke:0.05px currentColor;"><i class="bm"></i>1 Capsule</span>
<span class="t" id="t104" style="left:415.30px;top:537.00px;font-size:8.0px;font-weight:700;color:#2e343b;font-family:'Liberation Sans', sans-serif;transform:scaleX(0.9049);-webkit-text-stroke:0.18px currentColor;"><i class="bm"></i>First Marketing Date:</span>
<span class="t" id="t105" style="left:491.10px;top:537.00px;font-size:8.2px;font-weight:400;color:#5f646a;font-family:'Liberation Sans', sans-serif;transform:scaleX(0.8884);-webkit-text-stroke:0.05px currentColor;"><i class="bm"></i>01/01/2023</span>
<span class="t" id="t106" style="left:415.30px;top:548.00px;font-size:8.0px;font-weight:700;color:#2e343b;font-family:'Liberation Sans', sans-serif;transform:scaleX(0.8766);-webkit-text-stroke:0.18px currentColor;"><i class="bm"></i>FDA Approval Type:</span>
<span class="t" id="t107" style="left:486.50px;top:548.00px;font-size:8.2px;font-weight:400;color:#5f646a;font-family:'Liberation Sans', sans-serif;transform:scaleX(0.7863);-webkit-text-stroke:0.05px currentColor;"><i class="bm"></i>OTHER</span>
<span class="t" id="t108" style="left:415.30px;top:559.00px;font-size:8.0px;font-weight:700;color:#2e343b;font-family:'Liberation Sans', sans-serif;transform:scaleX(0.8972);-webkit-text-stroke:0.18px currentColor;"><i class="bm"></i>FDA Application Supplement Number:</span>
<span class="t" id="t109" style="left:549.50px;top:559.00px;font-size:8.2px;font-weight:400;color:#5f646a;font-family:'Liberation Sans', sans-serif;transform:scaleX(0.8431);-webkit-text-stroke:0.05px currentColor;"><i class="bm"></i>No Data</span>
</body></html>
